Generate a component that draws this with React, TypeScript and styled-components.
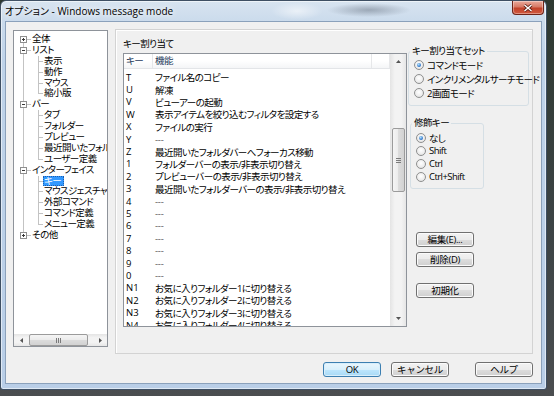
import React from 'react';
import styled, { createGlobalStyle, css } from 'styled-components';

const FONT = `"Open Sans", "Noto Sans CJK JP", sans-serif`;
const LINE = '#c3c3c3';

const GlobalStyle = createGlobalStyle`
  * { box-sizing: border-box; }
  html, body { margin: 0; padding: 0; }
  body {
    width: 554px;
    height: 396px;
    overflow: hidden;
    background: #3b4244;
    font-family: ${FONT};
    font-size: 9.5px;
    color: #000;
    font-feature-settings: "palt";
    letter-spacing: -0.55px;
  }
`;

const Desktop = styled.div`
  width: 554px;
  height: 396px;
  background: linear-gradient(180deg, #2e3931 0%, #3d4446 60%, #4b4e50 100%);
`;

const Window = styled.div`
  width: 547px;
  height: 390px;
  display: flex;
  flex-direction: column;
  padding: 0 4px 5px;
  border: 1px solid #3e4f63;
  border-radius: 6px 6px 3px 3px;
  background:
    radial-gradient(ellipse 42px 7px at 368px 9px, rgba(55, 65, 80, 0.35), transparent),
    radial-gradient(ellipse 26px 9px at 296px 10px, rgba(255, 255, 255, 0.55), transparent),
    linear-gradient(180deg, #d8e4f0 0px, #cbdbec 20px, #bfd3e9 60px, #b9cee7 100%);
  box-shadow: inset 0 0 0 1px rgba(255, 255, 255, 0.55);
`;

const TitleBar = styled.div`
  flex: none;
  height: 20px;
  display: flex;
  align-items: flex-start;
`;

const Caption = styled.div`
  flex: 1;
  line-height: 20px;
  font-size: 10px;
  letter-spacing: 0;
  white-space: nowrap;
  text-shadow: 0 0 5px #fff, 0 0 8px rgba(255, 255, 255, 0.9);
`;

const CloseBox = styled.div`
  width: 32px;
  height: 14px;
  margin-right: -2px;
  border: 1px solid #6e2418;
  border-top: none;
  border-radius: 0 0 4px 4px;
  background: linear-gradient(180deg, #eaa99b 0%, #d77a66 45%, #c2422a 55%, #d25a3f 100%);
  box-shadow: inset 0 0 0 1px rgba(255, 255, 255, 0.35);
  display: flex;
  align-items: center;
  justify-content: center;
`;

const Client = styled.div`
  flex: 1;
  display: flex;
  flex-direction: column;
  padding: 7px 8px 0 7px;
  background: #f0f0f0;
  border: 1px solid #8ba1bb;
`;

const MainRow = styled.div`
  display: flex;
  gap: 7px;
  align-items: flex-start;
`;

/* ---------- tree ---------- */

const TreeBox = styled.div`
  width: 95px;
  height: 317px;
  margin-top: 1px;
  border: 1px solid #8e939a;
  background: #fff;
  display: flex;
  flex-direction: column;
`;

const TreeBody = styled.div`
  flex: 1;
  overflow: hidden;
  padding-top: 3px;
`;

const RootList = styled.div`
  position: relative;
  &::before {
    content: '';
    position: absolute;
    left: 9px;
    top: 5px;
    bottom: 5px;
    width: 1px;
    background: ${LINE};
  }
`;

const ChildGroup = styled.div`
  position: relative;
  &::before {
    content: '';
    position: absolute;
    left: 24px;
    top: 0;
    bottom: 5px;
    width: 1px;
    background: ${LINE};
  }
`;

const TreeRow = styled.div<{ $child?: boolean }>`
  position: relative;
  height: 10.9px;
  display: flex;
  align-items: center;
  white-space: nowrap;
  padding-left: ${p => (p.$child ? 24 : 6)}px;
`;

const Tick = styled.span<{ $w: number }>`
  flex: none;
  width: ${p => p.$w}px;
  height: 1px;
  background: ${LINE};
`;

const TreeLabel = styled.span<{ $selected?: boolean }>`
  padding: 0 1px;
  line-height: 10.9px;
  ${p =>
    p.$selected &&
    css`
      background: #3399ff;
      color: #fff;
      outline: 1px dotted #1c5fb0;
      outline-offset: -1px;
      padding: 0 3px 0 1px;
    `}
`;

const Expander = ({ open }: { open: boolean }) => (
  <svg width="7" height="7" viewBox="0 0 7 7" style={{ flex: 'none', position: 'relative' }}>
    <rect x="0.5" y="0.5" width="6" height="6" fill="#fff" stroke="#8f8f8f" />
    <path d="M2 3.5h3" stroke="#3a3a3a" />
    {!open && <path d="M3.5 2v3" stroke="#3a3a3a" />}
  </svg>
);

/* ---------- scrollbars ---------- */

const HScroll = styled.div`
  flex: none;
  height: 12px;
  display: flex;
  align-items: stretch;
  background: linear-gradient(180deg, #e4e4e4, #f3f3f3 30%, #f3f3f3 70%, #e6e6e6);
`;

const ArrowCell = styled.div<{ $size: number; $vertical?: boolean }>`
  flex: none;
  ${p => (p.$vertical ? `height: ${p.$size}px;` : `width: ${p.$size}px;`)}
  display: flex;
  align-items: center;
  justify-content: center;
`;

const HThumb = styled.div`
  width: 59px;
  margin: 0 0 0 1px;
  border: 1px solid #9b9b9b;
  border-radius: 2px;
  background: linear-gradient(180deg, #f5f5f5 0%, #ebebeb 50%, #dcdcdc 50%, #d2d2d2 100%);
  display: flex;
  align-items: center;
  justify-content: center;
`;

const Track = styled.div`
  flex: 1;
`;

const VScroll = styled.div`
  flex: none;
  width: 16px;
  display: flex;
  flex-direction: column;
  background: linear-gradient(90deg, #e4e4e4, #f3f3f3 30%, #f3f3f3 70%, #e6e6e6);
`;

const VTrack = styled.div`
  flex: 1;
  padding: 59px 1px 0 2px;
`;

const VThumb = styled.div`
  height: 64px;
  border: 1px solid #9b9b9b;
  border-radius: 2px;
  background: linear-gradient(90deg, #f5f5f5 0%, #ebebeb 50%, #dcdcdc 50%, #d2d2d2 100%);
  display: flex;
  align-items: center;
  justify-content: center;
`;

const Grip = styled.span<{ $vertical?: boolean }>`
  display: block;
  width: 5px;
  height: 5px;
  background: repeating-linear-gradient(
    ${p => (p.$vertical ? '180deg' : '90deg')},
    #7a7a7a 0 1px,
    transparent 1px 2px
  );
`;

const Arrow = ({ dir }: { dir: 'up' | 'down' | 'left' | 'right' }) => {
  const pts = {
    up: '0,3 2.5,0 5,3',
    down: '0,0 2.5,3 5,0',
    left: '3,0 0,2.5 3,5',
    right: '0,0 3,2.5 0,5',
  }[dir];
  const horiz = dir === 'left' || dir === 'right';
  return (
    <svg width={horiz ? 3 : 5} height={horiz ? 5 : 3} viewBox={horiz ? '0 0 3 5' : '0 0 5 3'}>
      <polygon points={pts} fill="#555" />
    </svg>
  );
};

/* ---------- panel ---------- */

const Panel = styled.div`
  width: 418px;
  height: 325px;
  border: 1px solid #d3d3d3;
  box-shadow: inset 1px 1px 0 #fff;
  padding: 8px 0 0 7px;
  display: flex;
  align-items: flex-start;
`;

const KeyColumn = styled.div`
  display: flex;
  flex-direction: column;
`;

const SectionLabel = styled.div`
  height: 12px;
  line-height: 12px;
`;

const ListBox = styled.div`
  margin-top: 3px;
  width: 284px;
  height: 274px;
  border: 1px solid #8e939a;
  background: #fff;
  display: flex;
  overflow: hidden;
`;

const ListMain = styled.div`
  flex: 1;
  min-width: 0;
  display: flex;
  flex-direction: column;
  overflow: hidden;
`;

const Header = styled.div`
  flex: none;
  height: 15px;
  display: flex;
  background: linear-gradient(180deg, #ffffff 0%, #ffffff 50%, #f4f5f7 100%);
  border-bottom: 1px solid #e3e5e8;
`;

const HeaderCell = styled.div<{ $w?: number }>`
  ${p => (p.$w ? `width: ${p.$w}px; flex: none;` : 'flex: 1;')}
  padding-left: 2px;
  line-height: 14px;
  border-right: 1px solid #e6e7e9;
  color: #1e395b;
  white-space: nowrap;
`;

const Rows = styled.div`
  padding-top: 2px;
`;

const Row = styled.div`
  height: 12.4px;
  display: flex;
  align-items: center;
  white-space: nowrap;
`;

const KeyCell = styled.span`
  flex: none;
  width: 29px;
  padding-left: 2px;
  letter-spacing: 0;
`;

const FuncCell = styled.span<{ $dim?: boolean }>`
  padding-left: 2px;
  ${p => p.$dim && 'color: #555; letter-spacing: -0.2px;'}
`;

const SideColumn = styled.div`
  margin-left: 1px;
  padding-top: 7px;
  display: flex;
  flex-direction: column;
  align-items: flex-start;
`;

const Group = styled.fieldset<{ $w: number; $mt?: number; $ml?: number; $pb?: number; $pt?: number }>`
  width: ${p => p.$w}px;
  margin: ${p => p.$mt ?? 0}px 0 0 ${p => p.$ml ?? 0}px;
  padding: ${p => p.$pt ?? 1}px 0 ${p => p.$pb ?? 5}px 5px;
  border: 1px solid #d5dfe5;
  border-radius: 3px;
  min-width: 0;
`;

const Legend = styled.legend`
  padding: 0 2px;
  margin-left: -4px;
  line-height: 12px;
  height: 12px;
`;

const RadioRow = styled.label<{ $h: number }>`
  height: ${p => p.$h}px;
  display: flex;
  align-items: center;
  white-space: nowrap;
`;

const RadioDot = styled.span<{ $on?: boolean }>`
  position: relative;
  flex: none;
  width: 10px;
  height: 10px;
  margin-right: 3px;
  border-radius: 50%;
  border: 1px solid #8e8f8f;
  background: radial-gradient(circle at 50% 40%, #ffffff 0, #ececec 60%, #d6d6d6 100%);
  ${p =>
    p.$on &&
    css`
      &::after {
        content: '';
        position: absolute;
        left: 2px;
        top: 2px;
        width: 4px;
        height: 4px;
        border-radius: 50%;
        background: radial-gradient(circle at 40% 35%, #b5e2fc, #2f77cc 65%, #17498c);
      }
    `}
`;

const ActionStack = styled.div`
  margin: 43px 0 0 8px;
  display: flex;
  flex-direction: column;
`;

const WinButton = styled.button<{ $primary?: boolean; $mt?: number; $ml?: number }>`
  width: 58px;
  height: 15px;
  margin: ${p => p.$mt ?? 0}px 0 0 ${p => p.$ml ?? 0}px;
  padding: 0;
  font-family: ${FONT};
  font-size: 9.5px;
  letter-spacing: -0.3px;
  line-height: 13px;
  color: #000;
  border-radius: 3px;
  border: 1px solid #707070;
  background: linear-gradient(180deg, #f2f2f2 0%, #ebebeb 50%, #dddddd 50%, #cfcfcf 100%);
  box-shadow: inset 0 0 0 1px #fbfbfb;
  ${p =>
    p.$primary &&
    css`
      border-color: #3c7fb1;
      background: linear-gradient(180deg, #eaf6fd 0%, #d9f0fc 50%, #bee6fd 50%, #a7d9f5 100%);
      box-shadow: inset 0 0 0 1px #d8eefb;
    `}
`;

const Footer = styled.div`
  margin-top: 8px;
  display: flex;
  justify-content: flex-end;
`;

/* ---------- data ---------- */

type Node = { label: string; open: boolean; children?: string[] };

const tree: Node[] = [
  { label: '全体', open: false },
  { label: 'リスト', open: true, children: ['表示', '動作', 'マウス', '縮小版'] },
  { label: 'バー', open: true, children: ['タブ', 'フォルダー', 'プレビュー', '最近開いたフォルダーバー', 'ユーザー定義'] },
  { label: 'インターフェイス', open: true, children: ['キー', 'マウスジェスチャ', '外部コマンド', 'コマンド定義', 'メニュー定義'] },
  { label: 'その他', open: false },
];

const keys: [string, string][] = [
  ['T', 'ファイル名のコピー'],
  ['U', '解凍'],
  ['V', 'ビューアーの起動'],
  ['W', '表示アイテムを絞り込むフィルタを設定する'],
  ['X', 'ファイルの実行'],
  ['Y', '---'],
  ['Z', '最近開いたフォルダバーへフォーカス移動'],
  ['1', 'フォルダーバーの表示/非表示切り替え'],
  ['2', 'プレビューバーの表示/非表示切り替え'],
  ['3', '最近開いたフォルダーバーの表示/非表示切り替え'],
  ['4', '---'],
  ['5', '---'],
  ['6', '---'],
  ['7', '---'],
  ['8', '---'],
  ['9', '---'],
  ['0', '---'],
  ['N1', 'お気に入りフォルダー1に切り替える'],
  ['N2', 'お気に入りフォルダー2に切り替える'],
  ['N3', 'お気に入りフォルダー3に切り替える'],
  ['N4', 'お気に入りフォルダー4に切り替える'],
];

const keySets = [
  { label: 'コマンドモード', on: true },
  { label: 'インクリメンタルサーチモード', on: false },
  { label: '2画面モード', on: false },
];

const modifiers = [
  { label: 'なし', on: true },
  { label: 'Shift', on: false },
  { label: 'Ctrl', on: false },
  { label: 'Ctrl+Shift', on: false },
];

export default function App() {
  return (
    <Desktop>
      <GlobalStyle />
      <Window>
        <TitleBar>
          <Caption>オプション - Windows message mode</Caption>
          <CloseBox>
            <svg width="10" height="8" viewBox="0 0 10 8">
              <path d="M1.5 1L8.5 7M8.5 1L1.5 7" stroke="#5b1c12" strokeWidth="3" />
              <path d="M1.5 1L8.5 7M8.5 1L1.5 7" stroke="#fff" strokeWidth="1.5" />
            </svg>
          </CloseBox>
        </TitleBar>

        <Client>
          <MainRow>
            <TreeBox>
              <TreeBody>
                <RootList>
                  {tree.map(node => (
                    <React.Fragment key={node.label}>
                      <TreeRow>
                        <Expander open={node.open} />
                        <Tick $w={4} />
                        <TreeLabel>{node.label}</TreeLabel>
                      </TreeRow>
                      {node.open && node.children && (
                        <ChildGroup>
                          {node.children.map(child => (
                            <TreeRow $child key={child}>
                              <Tick $w={5} />
                              <TreeLabel $selected={child === 'キー'}>{child}</TreeLabel>
                            </TreeRow>
                          ))}
                        </ChildGroup>
                      )}
                    </React.Fragment>
                  ))}
                </RootList>
              </TreeBody>
              <HScroll>
                <ArrowCell $size={14}>
                  <Arrow dir="left" />
                </ArrowCell>
                <HThumb>
                  <Grip />
                </HThumb>
                <Track />
                <ArrowCell $size={14}>
                  <Arrow dir="right" />
                </ArrowCell>
              </HScroll>
            </TreeBox>

            <Panel>
              <KeyColumn>
                <SectionLabel>キー割り当て</SectionLabel>
                <ListBox>
                  <ListMain>
                    <Header>
                      <HeaderCell $w={29}>キー</HeaderCell>
                      <HeaderCell $w={219}>機能</HeaderCell>
                      <HeaderCell />
                    </Header>
                    <Rows>
                      {keys.map(([k, f]) => (
                        <Row key={k}>
                          <KeyCell>{k}</KeyCell>
                          <FuncCell $dim={f === '---'}>{f}</FuncCell>
                        </Row>
                      ))}
                    </Rows>
                  </ListMain>
                  <VScroll>
                    <ArrowCell $size={15} $vertical>
                      <Arrow dir="up" />
                    </ArrowCell>
                    <VTrack>
                      <VThumb>
                        <Grip $vertical />
                      </VThumb>
                    </VTrack>
                    <ArrowCell $size={15} $vertical>
                      <Arrow dir="down" />
                    </ArrowCell>
                  </VScroll>
                </ListBox>
              </KeyColumn>

              <SideColumn>
                <Group $w={121}>
                  <Legend>キー割り当てセット</Legend>
                  {keySets.map(r => (
                    <RadioRow $h={14} key={r.label}>
                      <RadioDot $on={r.on} />
                      {r.label}
                    </RadioRow>
                  ))}
                </Group>
                <Group $w={74} $mt={11} $ml={2} $pt={2}>
                  <Legend>修飾キー</Legend>
                  {modifiers.map(r => (
                    <RadioRow $h={13} key={r.label}>
                      <RadioDot $on={r.on} />
                      {r.label}
                    </RadioRow>
                  ))}
                </Group>
                <ActionStack>
                  <WinButton>編集(E)...</WinButton>
                  <WinButton $mt={5}>削除(D)</WinButton>
                  <WinButton $mt={16}>初期化</WinButton>
                </ActionStack>
              </SideColumn>
            </Panel>
          </MainRow>

          <Footer>
            <WinButton $primary>OK</WinButton>
            <WinButton $ml={10}>キャンセル</WinButton>
            <WinButton $ml={26}>ヘルプ</WinButton>
          </Footer>
        </Client>
      </Window>
    </Desktop>
  );
}
